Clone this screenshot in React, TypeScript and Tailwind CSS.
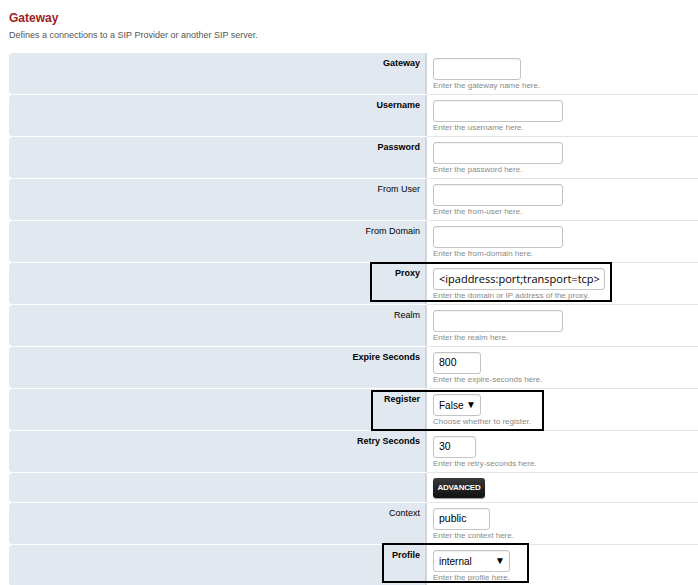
import React from "react";

type Row = {
  label: string;
  bold?: boolean;
  kind: "text" | "select" | "button";
  value?: string;
  width: number;
  hint?: string;
  box?: string;
};

const rows: Row[] = [
  { label: "Gateway", bold: true, kind: "text", width: 88, hint: "Enter the gateway name here." },
  { label: "Username", bold: true, kind: "text", width: 130, hint: "Enter the username here." },
  { label: "Password", bold: true, kind: "text", width: 130, hint: "Enter the password here." },
  { label: "From User", kind: "text", width: 130, hint: "Enter the from-user here." },
  { label: "From Domain", kind: "text", width: 130, hint: "Enter the from-domain here." },
  { label: "Proxy", bold: true, kind: "text", width: 172, value: "<ipaddress:port;transport=tcp>", hint: "Enter the domain or IP address of the proxy.", box: "proxy" },
  { label: "Realm", kind: "text", width: 130, hint: "Enter the realm here." },
  { label: "Expire Seconds", bold: true, kind: "text", width: 48, value: "800", hint: "Enter the expire-seconds here." },
  { label: "Register", bold: true, kind: "select", width: 48, value: "False", hint: "Choose whether to register.", box: "register" },
  { label: "Retry Seconds", bold: true, kind: "text", width: 43, value: "30", hint: "Enter the retry-seconds here." },
  { label: "", kind: "button", width: 52 },
  { label: "Context", kind: "text", width: 57, value: "public", hint: "Enter the context here." },
  { label: "Profile", bold: true, kind: "select", width: 77, value: "internal", hint: "Enter the profile here.", box: "profile" },
];

function Field({ row }: { row: Row }) {
  if (row.kind === "button") {
    return (
      <button className="mt-[5px] h-[20px] w-[52px] rounded-[3px] bg-gradient-to-b from-[#3a3a3a] to-[#111] text-[8px] font-bold tracking-tight text-white shadow-[0_1px_1px_rgba(0,0,0,0.4)]">
        ADVANCED
      </button>
    );
  }
  const isProxy = row.box === "proxy";
  const isSelect = row.kind === "select";
  return (
    <div className="pt-[5px]">
      <div
        className={`flex h-[22px] items-center justify-between rounded-[3px] border border-[#c4c4c4] bg-white pl-[5px] shadow-[inset_0_1px_1px_rgba(0,0,0,0.05)] ${isSelect ? "pr-[4px]" : "pr-[6px]"}`}
        style={{ width: row.width }}
      >
        <span className={isProxy ? "whitespace-nowrap font-['Open_Sans',sans-serif] text-[11px] text-black" : isSelect ? "text-[10px] text-black" : "text-[10.5px] text-black"}>
          {row.value ?? ""}
        </span>
        {isSelect && <span className="text-[10px] leading-none text-black">▼</span>}
      </div>
      <div className="mt-[1px] text-[8px] leading-[10px] text-[#8a8a8a]">{row.hint}</div>
    </div>
  );
}

export default function App() {
  return (
    <div className="relative h-[585px] w-[698px] overflow-hidden bg-white font-['Liberation_Sans',Arial,sans-serif]">
      <div className="pl-[9px] pt-[11px]">
        <h2 className="text-[12px] font-bold leading-[14px] text-[#9b2323]">Gateway</h2>
        <p className="mt-[5px] text-[9px] leading-[11px] text-[#555]">
          Defines a connections to a SIP Provider or another SIP server.
        </p>
      </div>

      <div className="mt-[12px] pl-[9px]">
        {rows.map((row, i) => (
          <div key={i} className={`flex ${row.kind === "button" ? "h-[30px]" : "h-[42px]"}`}>
            <div className="mb-px flex w-[418px] shrink-0 justify-end rounded-l-[4px] border-r-[2px] border-[#cfd5de] bg-[#e2e8f0] pr-[5px] pt-[5px]">
              <span className={`text-[9px] leading-[11px] text-black ${row.bold ? "font-bold" : ""}`}>{row.label}</span>
            </div>
            <div className="flex-1 border-b border-[#e4e4e4] pl-[6px]">
              <Field row={row} />
            </div>
          </div>
        ))}
      </div>

      <div className="absolute left-[370px] top-[262px] h-[40px] w-[242px] border-[2px] border-black" />
      <div className="absolute left-[371px] top-[390px] h-[41px] w-[173px] border-[2px] border-black" />
      <div className="absolute left-[382px] top-[543px] h-[40px] w-[147px] border-[2px] border-black" />
    </div>
  );
}
